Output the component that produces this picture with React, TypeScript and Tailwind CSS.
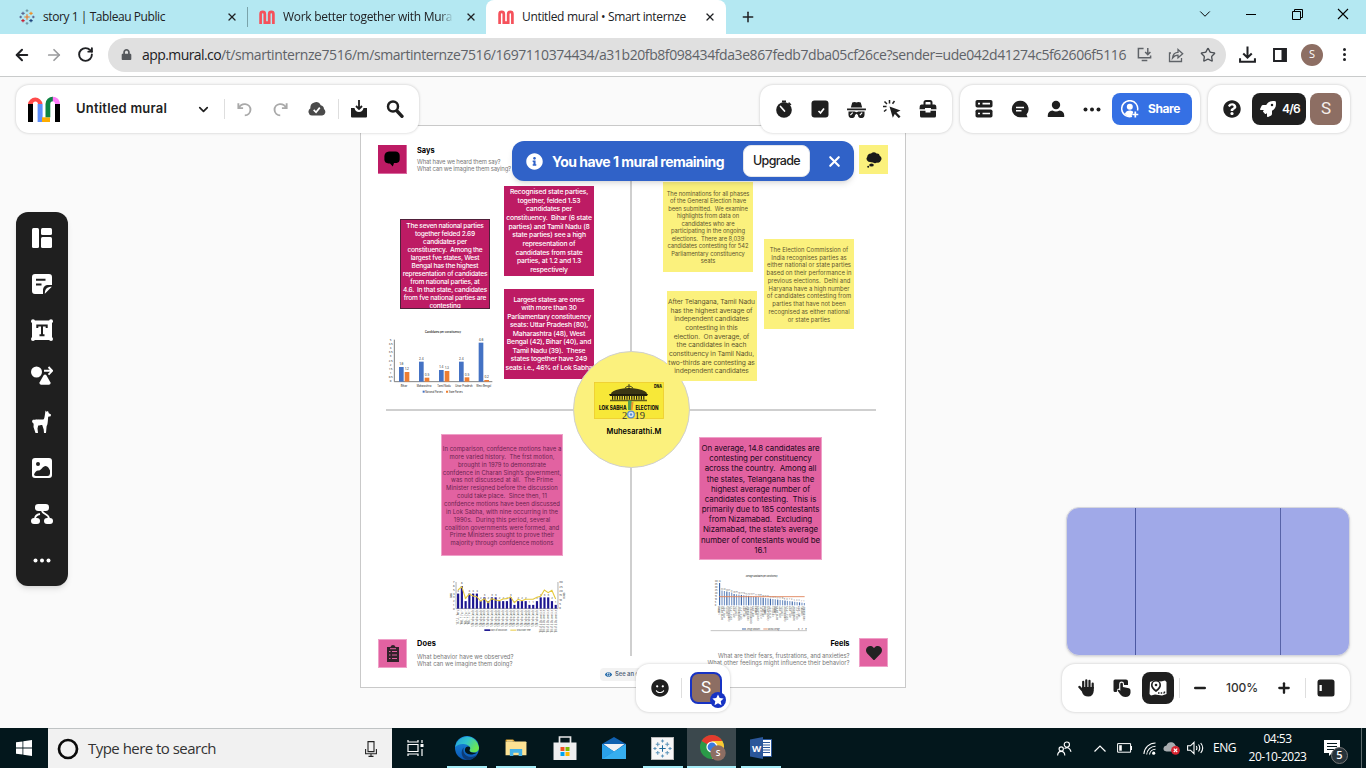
import React, { useLayoutEffect, useRef, useState } from "react";
import {
  ArrowLeft, ArrowRight, RotateCw, X, Plus, Minus, ChevronDown, Star,
} from "lucide-react";
import {
  FaUser, FaQuestionCircle, FaRocket, FaHeart, FaInfoCircle, FaEye, FaLock, FaSmile,
} from "react-icons/fa";

const SEGOE = "font-['Open_Sans','Noto_Sans',sans-serif]";
const MURAL = "font-['Inter','Noto_Sans',sans-serif]";

/** A single line of text whose tracking is adjusted to fill the given width. */
function Fit({ w, children, className = "" }: { w: number; children: string; className?: string }) {
  const ref = useRef<HTMLSpanElement>(null);
  const [ls, setLs] = useState(0);
  useLayoutEffect(() => {
    const el = ref.current!;
    setLs((w - el.getBoundingClientRect().width) / children.length);
  }, []);
  return (
    <span ref={ref} className={`inline-block whitespace-pre ${className}`} style={{ letterSpacing: ls }}>
      {children}
    </span>
  );
}

/** A sticky note: the widest line is tracked to `w`, the others share the tracking. */
function Note({ w, lines, className }: { w: number; lines: string[]; className: string }) {
  const ref = useRef<HTMLDivElement>(null);
  const [ls, setLs] = useState(0);
  useLayoutEffect(() => {
    let best = 0;
    let len = 1;
    ref.current!.querySelectorAll("span").forEach((s) => {
      const r = s.getBoundingClientRect().width;
      if (r > best) {
        best = r;
        len = s.textContent!.length;
      }
    });
    setLs((w - best) / len);
  }, []);
  return (
    <div ref={ref} className={`absolute flex flex-col items-center overflow-hidden whitespace-pre ${className}`} style={{ letterSpacing: ls }}>
      {lines.map((l, i) => (
        <span key={i} className="block">{l}</span>
      ))}
    </div>
  );
}

const Slot = ({ children }: { children: React.ReactNode }) => (
  <div className="flex h-8 w-9 shrink-0 items-center justify-center text-[#1f1f1f]">{children}</div>
);

const MuralMark = () => (
  <svg viewBox="0 0 16 14" className="h-[14px] w-[16px] shrink-0" fill="none" stroke="#f5515b" strokeWidth="2.7">
    <path d="M1.6 14V4a2.1 2.1 0 0 1 4.2 0v8.6h4.4V4a2.1 2.1 0 0 1 4.2 0v10" />
  </svg>
);

const MuralLogo = () => (
  <svg viewBox="0 0 32 26" className="h-[26px] w-8 shrink-0">
    <path d="M0 8h5v18H0zM27 8h5v18h-5z" fill="#000" />
    <path d="M0 8a7.3 7.3 0 0 1 14.5 0h-4.6a2.5 2.5 0 0 0-5 0z" fill="#ff4b4b" />
    <path d="M9.600 8h5v13.500l-.6 4.500h-4.400z" fill="#5c8dfa" />
    <path d="M14 21.300h8V26h-8z" fill="#fdac00" />
    <path d="M17.500 21.300V8A7.300 7.300 0 0 1 25 .7V5.300a2.700 2.700 0 0 0-2.700 2.700v13.300z" fill="#0d8343" />
    <path d="M24.800.7A7.300 7.300 0 0 1 32 8h-5a2.500 2.500 0 0 0-2.200-2.700z" fill="#ff7bfa" />
  </svg>
);

const TableauMark = ({ mono = false }: { mono?: boolean }) => {
  const c = (x: string) => (mono ? "#5b93b9" : x);
  return (
    <svg viewBox="0 0 24 24" className={mono ? "size-[19px]" : "size-4"} fill="none" strokeWidth={mono ? "1.3" : "1.7"}>
      <path d="M12 8v8M8 12h8" stroke={mono ? "#1f6a9c" : "#e97627"} />
      <path d="M6 4v5M3.500 6.500h5" stroke={c("#5c6692")} />
      <path d="M18 4v5M15.500 6.500h5" stroke={c("#eb912c")} />
      <path d="M6 15v5M3.500 17.500h5" stroke={c("#c72035")} />
      <path d="M18 15v5M15.500 17.500h5" stroke={c("#1f457e")} />
      <path d="M12 .5v4M10 2.500h4M12 19.500v4M10 21.500h4" stroke={c("#7199a6")} />
      <path d="M2.500 10v4M.5 12h4M21.500 10v4M19.500 12h4" stroke={c("#5b6591")} />
    </svg>
  );
};

function TabBar() {
  return (
    <div className={`flex h-[34px] items-stretch bg-[#b4e8f2] text-[12px] text-[#202124] ${SEGOE}`}>
      <div className="flex w-[247px] items-center pl-[19px]">
        <TableauMark />
        <div className="ml-2 w-[180px]"><Fit w={122}>story 1 | Tableau Public</Fit></div>
        <X className="ml-[3px] size-3" strokeWidth={2.6} />
      </div>
      <div className="my-[7px] w-px bg-[#7aa3aa]" />
      <div className="flex w-[238px] items-center pl-[11px]">
        <MuralMark />
        <div className="ml-2 w-[174px] overflow-hidden [mask-image:linear-gradient(to_right,black_90%,transparent_98%)]">
          <Fit w={172}>Work better together with Mural</Fit>
        </div>
        <X className="ml-[8px] size-3" strokeWidth={2.600} />
      </div>
      <div className="flex w-[240px] items-center rounded-t-lg bg-white pl-[12px]">
        <MuralMark />
        <div className="ml-2 w-[174px]"><Fit w={164}>Untitled mural • Smart internze</Fit></div>
        <X className="ml-[8px] size-3" strokeWidth={2.600} />
      </div>
      <div className="flex w-[44px] items-center justify-center"><Plus className="size-[16px]" strokeWidth={2.300} /></div>
      <div className="ml-auto flex h-[28px] items-center text-black">
        <div className="flex w-[46px] justify-center"><ChevronDown className="size-[18px]" strokeWidth={1.300} /></div>
        <div className="flex w-[46px] justify-center"><div className="h-px w-[10px] bg-black" /></div>
        <div className="flex w-[46px] justify-center">
          <svg viewBox="0 0 11 11" className="size-[11px]" fill="none" stroke="#000"><path d="M.5 2.500h8v8h-8zM2.500 2.500v-2h8v8h-2" /></svg>
        </div>
        <div className="flex w-[46px] justify-center">
          <svg viewBox="0 0 12 12" className="size-[12px]" stroke="#000" strokeWidth="1.100"><path d="M1 1l10 10M11 1L1 11" /></svg>
        </div>
      </div>
    </div>
  );
}

function AddressBar() {
  return (
    <div className={`flex h-[43px] items-center border-b border-[#c9cbcb] bg-white pb-px text-[#202124] ${SEGOE}`}>
      <ArrowLeft className="ml-[13px] size-[18px]" strokeWidth={2.700} />
      <ArrowRight className="ml-[14px] size-[18px] text-[#9a9b9d]" strokeWidth={2.300} />
      <RotateCw className="ml-[14px] size-[17px]" strokeWidth={2.700} />
      <div className="ml-[14px] flex h-[34px] w-[1118px] items-center rounded-full bg-[#e0e0e0] pl-[13px] text-[14px]">
        <FaLock className="size-[11px] text-[#55585c]" />
        <div className="ml-[10px] flex w-[984px]">
          <Fit w={79}>app.mural.co</Fit>
          <Fit w={905} className="text-[#5f6368]">/t/smartinternze7516/m/smartinternze7516/1697110374434/a31b20fb8f098434fda3e867fedb7dba05cf26ce?sender=ude042d41274c5f62606f5116</Fit>
        </div>
        <svg viewBox="0 0 16 16" className="ml-[11px] size-[15px]" fill="none" stroke="#5f6368" strokeWidth="1.600">
          <path d="M7 1.500H1.500v10h13V9M5 14.500h6M11.500 1v7M8.700 5.300l2.800 2.800 2.800-2.800" />
        </svg>
        <svg viewBox="0 0 16 16" className="ml-[16px] size-[16px]" fill="none" stroke="#5f6368" strokeWidth="1.300">
          <path d="M3 6H1.500v8.500h12V11M4.500 11C5 7 7 5.300 10 5.300V2.500l4.700 4.200L10 10.800V8.200C7.500 8.200 6 9 4.500 11z" />
        </svg>
        <Star className="ml-[16px] size-[16px] text-[#4d5156]" />
      </div>
      <svg viewBox="0 0 16 16" className="ml-[13px] size-[17px]" fill="none" stroke="#202124" strokeWidth="1.900">
        <path d="M8 .5v10M4 7l4 4 4-4M1 11.500v3.300h14v-3.300" />
      </svg>
      <svg viewBox="0 0 14 14" className="ml-[17px] size-[14px]"><path d="M1 1h12v12H1z" fill="none" stroke="#202124" strokeWidth="1.900" /><path d="M8.500 1H13v12H8.500z" fill="#202124" /></svg>
      <div className="ml-[14px] flex size-[22px] items-center justify-center rounded-full bg-[#8d6e63] text-[11px] text-white">S</div>
      <div className="ml-[20px] flex flex-col gap-[2px]">
        {[0, 1, 2].map((i) => <div key={i} className="size-[3px] rounded-full bg-[#202124]" />)}
      </div>
    </div>
  );
}

const CARD = "absolute flex items-center rounded-[13px] bg-white shadow-[0_0_3px_rgba(0,0,0,0.22)]";
const Divider = ({ className = "" }: { className?: string }) => <div className={`h-5 w-px shrink-0 bg-[#dedede] ${className}`} />;
const Dots = ({ className = "" }: { className?: string }) => (
  <svg viewBox="0 0 18 5" className={`h-[5px] w-[18px] ${className}`} fill="currentColor"><circle cx="2.500" cy="2.500" r="2" /><circle cx="9" cy="2.500" r="2" /><circle cx="15.500" cy="2.500" r="2" /></svg>
);

function TopBars() {
  return (
    <>
      <div className={`${CARD} left-4 top-[8px] h-[48px] w-[403px] pl-3`}>
        <MuralLogo />
        <div className="ml-4 w-[109px] text-[13px] font-semibold text-[#222]"><Fit w={91}>Untitled mural</Fit></div>
        <Slot><ChevronDown className="size-[15px]" strokeWidth={2.700} /></Slot>
        <Divider className="ml-[3px]" />
        <div className="ml-px flex">
          <Slot>
            <svg viewBox="0 0 18 18" className="size-[17px]" fill="none" stroke="#a9a9a9" strokeWidth="2"><path d="M2.500 2.500v5h5M3 7.300C4.500 4.500 7 3 9.800 3.300c3.500.3 5.700 3 5.500 6.200-.2 3.400-2.900 5.600-6 5.700" /></svg>
          </Slot>
          <Slot>
            <svg viewBox="0 0 18 18" className="size-[17px]" fill="none" stroke="#a9a9a9" strokeWidth="2"><path d="M15.500 2.500v5h-5M15 7.300C13.500 4.500 11 3 8.200 3.300c-3.500.3-5.700 3-5.500 6.200.2 3.400 2.900 5.600 6 5.700" /></svg>
          </Slot>
          <Slot>
            <svg viewBox="0 0 20 16" className="h-[15px] w-[19px]"><path d="M5 14.500A4.300 4.300 0 0 1 3.500 6.600 5.800 5.800 0 0 1 14.500 3.500a4.500 4.500 0 0 1 3.500 4A4 4 0 0 1 16 14.500z" fill="#4a4a4a" /><path d="M7 8.500l2.500 2.500 4-5" fill="none" stroke="#fff" strokeWidth="1.800" /></svg>
          </Slot>
        </div>
        <Divider className="ml-[4px] mr-[2px]" />
        <Slot>
          <svg viewBox="0 0 18 18" className="size-[18px]"><path d="M1 8h3.500c.5 2.500 2 4 4.500 4s4-1.500 4.500-4H17v8.500a1 1 0 0 1-1 1H2a1 1 0 0 1-1-1z" fill="currentColor" /><path d="M9 0v9M6 6l3 3 3-3" fill="none" stroke="currentColor" strokeWidth="1.800" /></svg>
        </Slot>
        <Slot>
          <svg viewBox="0 0 18 18" className="size-[18px]" fill="none" stroke="currentColor" strokeLinecap="round"><circle cx="7" cy="6.500" r="5" strokeWidth="2.500" /><path d="M11.500 11.500l4.500 4.800" strokeWidth="3.400" /></svg>
        </Slot>
      </div>

      <div className={`${CARD} left-[760px] top-[8px] h-[48px] w-[192px] pl-[6px]`}>
        <Slot>
          <svg viewBox="0 0 18 18" className="size-[18px]"><circle cx="9" cy="10" r="7.800" fill="currentColor" /><path d="M7 .5h4v2H7zM14 2l2.500 2.500-1.500 1L13 3.500z" fill="currentColor" /><path d="M5.500 6.500L9.500 11" stroke="#fff" strokeWidth="1.700" strokeLinecap="round" /></svg>
        </Slot>
        <Slot>
          <svg viewBox="0 0 18 18" className="size-[18px]"><rect x=".5" y=".5" width="17" height="17" rx="3" fill="currentColor" /><path d="M7.500 11l2 2 3.500-4.500" stroke="#fff" strokeWidth="1.700" fill="none" /></svg>
        </Slot>
        <Slot>
          <svg viewBox="0 0 20 18" className="h-[17px] w-[19px]" fill="currentColor"><path d="M5.500 1.500L8 1l2 .7L12 1l2.500.5L16 7H4zM0 8h20v1.800H0z" /><path d="M1.500 11h6.500l2 1 2-1h6.500v3.500a3.500 3.500 0 0 1-7 .3L10 13.500l-1.500 1.300a3.500 3.500 0 0 1-7-.3z" /><path d="M3.500 15l2.500-2.800M13.500 15l2.500-2.800" stroke="#fff" strokeWidth="1.200" /></svg>
        </Slot>
        <Slot>
          <svg viewBox="0 0 18 18" className="size-[18px]" fill="currentColor"><path d="M6.500 6.500l11 4-4 2 4 4-1.700 1.700-4-4.200-2 3.700z" /><path d="M0 6.500h3.500M1.500 1.500l2.500 2.500M6.500 0v3.500M11.500 1L9.500 3.700M1 11.500l2.500-2" stroke="currentColor" strokeWidth="1.500" /></svg>
        </Slot>
        <Slot>
          <svg viewBox="0 0 18 18" className="size-[18px]"><path d="M5.500 5V2.500Q5.500 1 7 1h4q1.500 0 1.500 1.500V5" fill="none" stroke="currentColor" strokeWidth="2" /><path d="M2.500 4.500h13q1.500 0 1.700 1.500l.3 3.200H12V8H6v1.200H.5L.8 6q.2-1.500 1.700-1.500zM1 10.700h5.500V12.500h5v-1.800H17V16a1.500 1.500 0 0 1-1.500 1.500h-13A1.500 1.500 0 0 1 1 16z" fill="currentColor" /></svg>
        </Slot>
      </div>

      <div className={`${CARD} left-[960px] top-[8px] h-[48px] w-[240px] pl-[6px]`}>
        <Slot>
          <svg viewBox="0 0 18 18" className="size-[18px]"><rect x=".5" y="0" width="17" height="7.500" rx="1.800" fill="currentColor" /><rect x=".5" y="9.500" width="17" height="8" rx="1.800" fill="currentColor" /><path d="M3 3.700h2M7.500 3.700h7.500M3 13.500h2M7.500 13.500h7.500" stroke="#fff" strokeWidth="1.700" /></svg>
        </Slot>
        <Slot>
          <svg viewBox="0 0 18 18" className="size-[18px]"><path d="M9 .8a8.200 8.200 0 1 0 0 16.400h7.500l-1-2.800A8.200 8.200 0 0 0 9 .8z" fill="currentColor" /><path d="M5 7.500h8M5 10.700h5.500" stroke="#fff" strokeWidth="1.500" /></svg>
        </Slot>
        <Slot>
          <svg viewBox="0 0 18 18" className="size-[18px]" fill="currentColor"><circle cx="9" cy="5" r="4.200" /><path d="M.8 17v-2q.3-4 4.700-4.500Q9 12.300 12.500 10.500q4.400.5 4.700 4.500v2z" /></svg>
        </Slot>
        <Slot><Dots /></Slot>
        <div className="ml-[2px] flex h-8 w-20 items-center rounded-lg bg-[#3570e4] pl-[9px] text-white">
          <svg viewBox="0 0 18 18" className="size-[18px]" fill="none" stroke="#fff" strokeWidth="1.500"><path d="M11 16.300a8 8 0 1 1 5.500-5.800" /><circle cx="8.800" cy="6.800" r="3" fill="#fff" stroke="none" /><path d="M3.800 14c.8-2.500 2.700-3.500 5-3.500 1.500 0 2.700.5 3.500 1.500L10.500 16c-2.500.8-5 0-6.700-2z" fill="#fff" stroke="none" /><path d="M14.300 11.500v6M11.300 14.500h6" strokeWidth="1.700" /></svg>
          <span className="ml-[9px] text-[12px] font-bold"><Fit w={32}>Share</Fit></span>
        </div>
      </div>

      <div className={`${CARD} left-[1208px] top-[8px] h-[48px] w-[142px] pl-[6px]`}>
        <Slot><FaQuestionCircle className="size-[18px]" /></Slot>
        <div className="ml-[2px] flex h-8 w-[54px] items-center rounded-lg bg-[#1f1f1f] pl-2 text-[12px] font-semibold text-white">
          <FaRocket className="size-[16px]" />
          <span className="ml-[6px]"><Fit w={18}>4/6</Fit></span>
        </div>
        <div className={`ml-1 flex size-8 items-center justify-center rounded-lg bg-[#8d6e63] text-[17px] text-[#f6efec] font-['Roboto',sans-serif]`}>S</div>
      </div>
    </>
  );
}

function SideBar() {
  const s = "size-[22px]";
  const items = [
    <svg viewBox="0 0 22 22" className={s} fill="#fff"><rect x="1" y="1" width="7" height="20" rx="1.500" /><rect x="10" y="1" width="11" height="7" rx="1.500" /><rect x="10" y="10" width="11" height="11" rx="1.500" /></svg>,
    <svg viewBox="0 0 22 22" className={s} fill="#fff"><path d="M4 1h14a3 3 0 0 1 3 3v8h-3.500C14 12 12 14 12 17.500V21H4a3 3 0 0 1-3-3V4a3 3 0 0 1 3-3z" /><path d="M13.800 20.800c0-4.500 2-7 7-7z" /><path d="M5 6.700h9.500M5 11.500h5.500" stroke="#1f1f1f" strokeWidth="2.100" /></svg>,
    <svg viewBox="0 0 22 22" className={s} fill="#fff"><rect x="1" y="1.500" width="20" height="19.500" /><circle cx="2" cy="2.300" r="2" /><circle cx="20" cy="2.300" r="2" /><circle cx="2" cy="20" r="2" /><circle cx="20" cy="20" r="2" /><path d="M6.300 9V6.600h9.400V9M11 6.600v9.600M8.500 16.300h5" fill="none" stroke="#1f1f1f" strokeWidth="2" /></svg>,
    <svg viewBox="0 0 22 22" className={s} fill="#fff"><circle cx="5.500" cy="7" r="5.500" /><path d="M12.500 10.500q1.500-2 3 0l4 7q.6 2-1.500 2.200h-8q-2-.2-1.500-2.200z" /><path d="M13 5.800h7.500M17.500 2l3.700 3.800L17.500 9.600" fill="none" stroke="#fff" strokeWidth="1.900" /></svg>,
    <svg viewBox="0 0 22 24" className="h-6 w-[22px]" fill="#fff"><path d="M14.500.5l1 1.200L17 1l.8 2.200 2.200 1.300-.3 1.700-2.500.5c-.3 2.500-.2 4-.7 7-.2 1.300-1 2.200-1 3.500l-.5 5.800h-2l-.3-3.500-1.500-4.500-1-.1c-1.500.6-3 .6-3 .6l-.7 3 .5 4.500H4.500l-2-6c0-1.500.3-2 0-3.500L1 12l.5-2c1.500-.5 9-.3 11.300-.7.9-1.800 1.200-5.300 1.700-8.800z" /></svg>,
    <svg viewBox="0 0 22 22" className={s}><rect x="1" y="1" width="20" height="20" rx="3" fill="#fff" /><circle cx="7" cy="7" r="2" fill="#1f1f1f" /><path d="M3 17.500c1-2.500 2.500-4.500 5-4 2-.2 4-4.500 6.500-4.500 2.500.3 3.500 2.500 4.500 4.500v3q-.2 2.500-2.500 2.500h-11Q3.200 19 3 17.500z" fill="#1f1f1f" /></svg>,
    <svg viewBox="0 0 22 22" className={s} fill="#fff"><rect x="4" y="1" width="14" height="7" rx="3.300" /><rect x="0" y="15" width="9" height="6" rx="3" /><rect x="13" y="15" width="9" height="6" rx="3" /><path d="M11 7c0 5 7 3 7 9M4 16c0-3.500 2-4.500 5-5" fill="none" stroke="#fff" strokeWidth="1.800" /></svg>,
    <Dots className="text-white" />,
  ];
  return (
    <div className="absolute left-4 top-[135px] flex h-[374px] w-[52px] flex-col rounded-[12px] bg-[#1f1f1f] py-[3px] shadow-md">
      {items.map((it, i) => <div key={i} className="flex h-[46px] shrink-0 items-center justify-center">{it}</div>)}
    </div>
  );
}

function StateChart() {
  const d = [[42, 126, 141, "1.8", "1.2", "Bihar"], [102, 110, 158, "2.4", "0.5", "Maharashtra"], [162, 135, 138, "1.4", "1.3", "Tamil Nadu"], [222, 110, 157, "2.4", "0.5", "Uttar Pradesh"], [281, 53, 165, "4.6", "0.2", "West Bengal"]] as [number, number, number, string, string, string][];
  return (
    <svg viewBox="0 0 345 225" className="absolute left-[25px] top-[200px] h-[75px] w-[115px] font-['Inter',sans-serif]" fill="#222" textAnchor="middle" fontSize="8">
      <text x="174" y="25" fontSize="9" fontWeight="600" textLength="108" lengthAdjust="spacingAndGlyphs">Candidates per constituency</text>
      <path d="M28 44v126h294" fill="none" stroke="#666" strokeWidth="2.500" />
      {["5", "4.5", "4", "3.5", "3", "2.5", "2", "1.5", "1", "0.5", "0"].map((t, i) => <text key={t} x="17" y={47 + i * 12.500}>{t}</text>)}
      {d.map(([x, a, b, la, lb, n]) => (
        <g key={n}>
          <rect x={x} y={a} width="14" height={170 - a} fill="#4472c4" />
          <rect x={x + 17} y={b} width="14" height={170 - b} fill="#ed7d31" />
          <text x={x + 7} y={a - 5} fontSize="9">{la}</text>
          <text x={x + 24} y={b - 5} fontSize="9">{lb}</text>
          <text x={x + 15} y="185" textLength={n.length * 4} lengthAdjust="spacingAndGlyphs" fontSize="9">{n}</text>
        </g>
      ))}
      <path d="M113 197h6v6h-6z" fill="#4472c4" /><path d="M183 197h6v6h-6z" fill="#ed7d31" />
      <text x="147" y="203" fontSize="9" textLength="52" lengthAdjust="spacingAndGlyphs">National Parties</text>
      <text x="212" y="203" fontSize="9" textLength="42" lengthAdjust="spacingAndGlyphs">State Parties</text>
    </svg>
  );
}

function MotionChart() {
  const v = [4, 6, 2, 4, 4, 4, 2, 3, 2, 3, 3, 2, 2, 2, 3, 1, 2, 2, 2, 1, 1, 2, 3, 3, 3, 2, 1];
  const l = [570, 560, 595, 582, 588, 590, 603, 596, 608, 596, 600, 602, 597, 596, 591, 608, 598, 602, 598, 598, 598, 592, 589, 570, 578, 571, 597];
  const names = ["1963 J. L. Nehru", "1964 L. B. Shastri", "1965 L. B. Shastri", "1965 L. B. Shastri"];
  const name = (i: number) => (i < 4 ? names[i] : i < 22 ? "1974 Indira Gandhi" : "1999 A. B. Vajpayee Gov");
  return (
    <svg viewBox="260 540 360 160" className="absolute left-[86.700px] top-[180px] h-[53.300px] w-[120px] font-['Inter',sans-serif]" fontSize="8" fill="#333">
      <path d="M287 546v80h306v-80" fill="none" stroke="#888" strokeWidth="2" />
      {v.map((n, i) => {
        const x = 290 + i * 11.270;
        return (
          <g key={i}>
            <rect x={x} y={626 - n * 11.300} width="6.500" height={n * 11.300} fill="#1c1690" />
            <text x={x + 1} y={621 - n * 11.300}>{n}</text>
            <text transform={`translate(${x + 6} 630) rotate(-90)`} textAnchor="end" fontSize="8.500" textLength={i < 4 ? 44 : i < 22 ? 51 : 68} lengthAdjust="spacingAndGlyphs">{name(i)}</text>
          </g>
        );
      })}
      <polyline points={l.map((y, i) => `${293 + i * 11.270},${y}`).join(" ")} fill="none" stroke="#e6c93c" strokeWidth="3.300" />
      {[7, 6, 5, 4, 3, 2, 1, 0].map((n, i) => <text key={n} x="278" y={550 + i * 11.300}>{n}</text>)}
      {[30, 25, 20, 15, 10, 5, 0].map((n, i) => <text key={n} x="597" y={550 + i * 13}>{n}</text>)}
      <text transform="translate(275 594) rotate(-90)" textLength="15">Days</text>
      <text transform="translate(614 596) rotate(-90)" textLength="18">Hours</text>
      <path d="M372 688h18v5h-18z" fill="#1c1690" /><path d="M450 690.500h17" stroke="#e6c93c" strokeWidth="3" />
      <text x="392" y="694" textLength="48" lengthAdjust="spacingAndGlyphs">Days of Discussion</text><text x="469" y="694" textLength="42" lengthAdjust="spacingAndGlyphs">Discussion Time</text>
    </svg>
  );
}

function AverageChart() {
  const top = (i: number) => (i === 0 ? 548 : i < 6 ? 569 + i * 1.500 : 581 + (i - 6) * 0.930);
  return (
    <svg viewBox="240 518 295 177" className="absolute left-[350px] top-[447.700px] h-[59px] w-[98.300px] font-['Inter',sans-serif]" fontSize="7" fill="#444">
      <text x="347" y="529" fontSize="8" fontWeight="600" textLength="96" lengthAdjust="spacingAndGlyphs">Average candidates per constituency</text>
      {[40, 35, 30, 25, 20, 15, 10, 5, 0].map((n, i) => <text key={n} x="254" y={544 + i * 9.200}>{n}</text>)}
      {Array.from({ length: 36 }, (_, i) => {
        const x = 267 + i * 7.270;
        const len = 24 + ((i * 17) % 23) + (i === 13 ? 14 : 0);
        return (
          <g key={i}>
            <rect x={x} y={top(i)} width="3.500" height={615 - top(i)} fill={i % 3 ? "#7b9ac9" : "#3f68a8"} />
            <text x={x - 1} y={top(i) - 3} fontSize="5">{36 - i}</text>
            <text transform={`translate(${x + 4} 618) rotate(-90)`} textAnchor="end" textLength={len} lengthAdjust="spacingAndGlyphs">Constituency</text>
          </g>
        );
      })}
      <path d="M267 589h257" stroke="#dd7f55" strokeWidth="2.600" />
      <path d="M242 691h289" stroke="#888" strokeWidth="1.500" />
      <path d="M336 686h12" stroke="#3f68a8" strokeWidth="3" /><path d="M400 686h12" stroke="#dd7f55" strokeWidth="2.500" />
      <text x="350" y="688" textLength="40" lengthAdjust="spacingAndGlyphs">Average Candidates</text><text x="413" y="688" textLength="36" lengthAdjust="spacingAndGlyphs">National Average</text>
      <text x="504" y="689" textLength="26">8 7 9</text>
    </svg>
  );
}

function Heading({ title, a, b, wa, wb, right = false, gap }: { title: string; a: string; b: string; wa: number; wb: number; right?: boolean; gap: string }) {
  return (
    <div className={`flex flex-col ${right ? "items-end" : "items-start"} text-[5.900px] leading-[7.700px] text-[#777]`}>
      <div className={`${gap} text-[7.400px] font-bold leading-[9px] text-black`}><Fit w={title === "Says" ? 17.500 : 19}>{title}</Fit></div>
      <Fit w={wa}>{a}</Fit>
      <Fit w={wb}>{b}</Fit>
    </div>
  );
}

function Board() {
  return (
    <div className="absolute left-[360px] top-[48px] h-[562.500px] w-[546px] border-[1.500px] border-[#c9c9c9] bg-white">
      <div className="absolute -left-px -top-px size-full">
        <div className="absolute left-[26px] top-[284px] h-[1.500px] w-[490px] bg-[#cfcfcf]" />
        <div className="absolute left-[270px] top-[56px] h-[475px] w-[1.500px] bg-[#cfcfcf]" />

        <div className="absolute left-[18px] top-[20px] flex size-[29px] items-center justify-center border-b border-r border-[#d9679f] bg-[#bd1b64]">
          <svg viewBox="0 0 16 16" className="size-[16px]"><path d="M5 .5h6.500Q15.500.8 15.700 4.500v4q-.2 3-3 3.500H10L8.800 15.500 6 12.500H4.500Q.8 12 .4 9V5Q.8.800 5 .5z" /></svg>
        </div>
        <div className="absolute left-[57px] top-[21px]"><Heading gap="mb-[2.500px]" title="Says" a="What have we heard them say?" b="What can we imagine them saying?" wa={83.500} wb={94} /></div>
        <div className="absolute left-[499px] top-[20px] flex size-[29px] items-center justify-center bg-[#fbf17d]">
          <svg viewBox="0 0 16 16" className="size-[16px]" fill="#1a1a1a"><path d="M5 1.500Q8-1 10.500 1.500q3-.3 3.200 2.300Q16.500 5.500 15 8.300q-1 3-4 2.200-2 1.500-4 0L2.500 9.700Q-.8 7.500 1.200 5 1.500 1.800 5 1.500z" /><ellipse cx="5.500" cy="13" rx="2.300" ry="1.500" /><circle cx="2.200" cy="14.800" r="1" /></svg>
        </div>

        <Note className="left-[40px] top-[94px] h-[90px] w-[90px] border border-[#50203a] bg-[#bd1b64] pt-[2px] text-[6.600px] font-medium leading-[8px] text-white" w={84}
          lines={["The seven national parties", "together felded 2.69", "candidates per", "constituency.  Among the", "largest fve states, West", "Bengal has the highest", "representation of candidates", "from national parties, at", "4.6.  In that state, candidates", "from fve national parties are", "contesting"]} />
        <Note className="left-[144px] top-[61px] h-[90px] w-[90px] bg-[#bd1b64] pt-[2px] text-[6.800px] font-medium leading-[8.670px] text-white" w={85.500}
          lines={["Recognised state parties,", "together, felded 1.53", "candidates per", "constituency.  Bihar (6 state", "parties) and Tamil Nadu (8", "state parties) see a high", "representation of", "candidates from state", "parties, at 1.2 and 1.3", "respectively"]} />
        <Note className="left-[144px] top-[164px] h-[90px] w-[90px] bg-[#bd1b64] pt-[6.500px] text-[6.800px] font-medium leading-[8.500px] text-white" w={87}
          lines={["Largest states are ones", "with more than 30", "Parliamentary constituency", "seats: Uttar Pradesh (80),", "Maharashtra (48), West", "Bengal (42), Bihar (40), and", "Tamil Nadu (39).  These", "states together have 249", "seats i.e., 46% of Lok Sabha"]} />

        <div className="absolute left-[212.500px] top-[226px] flex size-[117px] flex-col items-center rounded-full border-[1.500px] border-[#cfcfcf] bg-[#fbf17d]">
          <svg viewBox="0 0 70 37" className="mr-[4px] mt-[30px] h-[37px] w-[70px] shrink-0">
            <rect width="70" height="37" fill="#f7e838" />
            <rect x=".5" y=".5" width="69" height="36" fill="none" stroke="#edc934" strokeWidth=".7" />
            <path d="M17 12q0-3 9-5 5-1 9-1t9 1q9 2 9 5z" fill="#3b3714" />
            <path d="M15 12h39l-1 2H16z" fill="#1f1d0c" />
            <path d="M18 15.500h33" stroke="#2a270f" strokeWidth="4.500" strokeDasharray="1.200 1.200" />
            <path d="M16 18.500h37" stroke="#625c1b" strokeWidth="1.300" />
            <path d="M35 2v5M31 6q4-4 8 0" stroke="#222" strokeWidth=".8" fill="none" />
            <path d="M34 19q2-2 4 1l-1 8h-3z" fill="#4da05a" /><path d="M37.500 20h2l-1 8h-1.500z" fill="#ee9130" />
            <g className="font-['Inter',sans-serif]" fontWeight="800" fill="#111">
              <text x="5" y="28.300" fontSize="6" textLength="27.500" lengthAdjust="spacingAndGlyphs">LOK SABHA</text>
              <text x="41.500" y="28.300" fontSize="6" textLength="23" lengthAdjust="spacingAndGlyphs">ELECTION</text>
              <text x="60" y="5.800" fontSize="4.500" textLength="8" lengthAdjust="spacingAndGlyphs">DNA</text>
            </g>
            <g className="font-['Liberation_Serif',serif]" fontSize="10.500" fill="#333"><text x="28" y="36.700">2</text><text x="40.500" y="36.700">19</text></g>
            <circle cx="37" cy="32.500" r="3.300" fill="#d9e6f2" stroke="#5b8dcd" strokeWidth="1.300" /><circle cx="37" cy="32.500" r="1.200" fill="#5b8dcd" />
          </svg>
          <div className="ml-[6px] mt-[8px] text-[7.400px] font-semibold leading-[9px] text-black"><Fit w={55}>Muhesarathi.M</Fit></div>
        </div>

        <Note className="left-[303px] top-[56.500px] h-[90px] w-[90px] bg-[#fbf17d] pt-[8px] text-[5.800px] leading-[7.550px] text-[#5f5630]" w={82.700}
          lines={["The nominations for all phases", "of the General Election have", "been submitted.  We examine", "highlights from data on", "candidates who are", "participating in the ongoing", "elections.  There are 8,039", "candidates contesting for 542", "Parliamentary constituency", "seats"]} />
        <Note className="left-[404px] top-[114px] h-[90px] w-[90px] bg-[#fbf17d] pt-[6.800px] text-[5.900px] leading-[7.780px] text-[#5f5630]" w={85}
          lines={["The Election Commission of", "India recognises parties as", "either national or state parties", "based on their performance in", "previous elections.  Delhi and", "Haryana have a high number", "of candidates contesting from", "parties that have not been", "recognised as either national", "or state parties"]} />
        <Note className="left-[306.500px] top-[166px] h-[90px] w-[90px] bg-[#fbf17d] pt-[7px] text-[6.700px] leading-[8.670px] text-[#5f5630]" w={87}
          lines={["After Telangana, Tamil Nadu", "has the highest average of", "independent candidates", "contesting in this", "election.  On average, of", "the candidates in each", "constituency in Tamil Nadu,", "two-thirds are contesting as", "independent candidates"]} />

        <Note className="left-[81px] top-[309px] h-[122px] w-[122px] border border-[#efa0c8] bg-[#e262a1] pt-[10px] text-[5.900px] leading-[7.860px] text-[#6b2450]" w={118.500}
          lines={["In comparison, confdence motions have a", "more varied history.  The frst motion,", "brought in 1979 to demonstrate", "confdence in Charan Singh’s government,", "was not discussed at all.  The Prime", "Minister resigned before the discussion", "could take place.  Since then, 11", "confdence motions have been discussed", "in Lok Sabha, with nine occurring in the", "1990s.  During this period, several", "coalition governments were formed, and", "Prime Ministers sought to prove their", "majority through confdence motions"]} />
        <Note className="left-[339px] top-[312px] h-[123px] w-[123px] border border-[#efa0c8] bg-[#e262a1] pt-[5px] text-[7.900px] leading-[10.170px] text-[#220a1c]" w={119}
          lines={["On average, 14.8 candidates are", "contesting per constituency", "across the country.  Among all", "the states, Telangana has the", "highest average number of", "candidates contesting.  This is", "primarily due to 185 contestants", "from Nizamabad.  Excluding", "Nizamabad, the state’s average", "number of contestants would be", "16.1"]} />

        <StateChart />
        <div className="absolute left-0 top-[275px]"><MotionChart /></div>
        <AverageChart />

        <div className="absolute left-[18px] top-[514px] flex size-[29px] items-center justify-center border border-[#efa0c8] bg-[#e262a1]">
          <svg viewBox="0 0 12 17" className="h-[17px] w-[12px]"><path d="M0 2h3.500Q4 0 6 0t2.500 2H12v15H0z" fill="#33222b" /><path d="M2 6.500h1.500M5 6.500h5M2 10h1.500M5 10h5M2 13.500h1.500M5 13.500h5M3 3.700h6" stroke="#e262a1" strokeWidth="1" /></svg>
        </div>
        <div className="absolute left-[57px] top-[514px]"><Heading gap="mb-[4.500px]" title="Does" a="What behavior have we observed?" b="What can we imagine them doing?" wa={96.500} wb={95.500} /></div>
        <div className="absolute right-[54.500px] top-[514px]"><Heading gap="mb-[3.500px]" right title="Feels" a="What are their fears, frustrations, and anxieties?" b="What other feelings might influence their behavior?" wa={131.500} wb={142} /></div>
        <div className="absolute left-[499px] top-[513px] flex size-[29px] items-center justify-center border border-[#efa0c8] bg-[#e262a1]"><FaHeart className="size-[16px] text-[#222]" /></div>
        <div className="absolute left-[240px] top-[542.500px] flex h-[13px] w-[60px] items-center rounded bg-[#f2f2f2] pl-[5px] text-[5.800px] font-semibold text-[#56667c]">
          <FaEye className="size-[7px] shrink-0 text-[#1d65a6]" /><span className="ml-[3px] whitespace-pre">See an example</span>
        </div>
      </div>
    </div>
  );
}

function Banner() {
  return (
    <div className="absolute left-[512px] top-[64px] flex h-10 w-[342px] items-center rounded-[12px] bg-[#3062c8] pl-[14px] text-white shadow-md">
      <FaInfoCircle className="size-[17px]" />
      <div className="ml-[9px] w-[191px] text-[14px] font-bold"><Fit w={172}>You have 1 mural remaining</Fit></div>
      <div className="flex h-8 w-[67px] items-center justify-center rounded-lg border-[1.500px] border-[#e3e5ea] bg-white text-[12.500px] font-medium text-[#222]"><Fit w={47}>Upgrade</Fit></div>
      <X className="ml-[15.500px] size-[17px]" strokeWidth={3} />
    </div>
  );
}

function BottomBars() {
  return (
    <>
      <div className={`${CARD} left-[636px] top-[587px] h-[48px] w-[94px] pl-[6px]`}>
        <Slot><FaSmile className="size-[18px]" /></Slot>
        <Divider className="ml-[3px]" />
        <div className="relative ml-2 flex size-8 items-center justify-center rounded-lg border-2 border-[#1733c4] bg-[#8d6e63] text-[17px] text-white font-['Roboto',sans-serif]">
          S
          <svg viewBox="0 0 16 16" className="absolute -bottom-[6px] -right-[6px] size-[16px]"><circle cx="8" cy="8" r="8" fill="#1733c4" /><path d="M8 2.500l1.700 3.600 3.900.5-2.900 2.700.8 3.900L8 11.300l-3.500 1.900.8-3.900-2.900-2.700 3.900-.5z" fill="#fff" /></svg>
        </div>
      </div>
      <div className="absolute left-[1066px] top-[430px] flex h-[149px] w-[284px] rounded-[13px] border border-[#d5d6de] bg-[#a0a9e8] shadow">
        <div className="w-[69px] border-r border-[#4c59a2]" />
        <div className="w-[145px] border-r border-[#5763a8]" />
      </div>
      <div className={`${CARD} left-[1062px] top-[587px] h-[48px] w-[288px] pl-[6px]`}>
        <Slot>
          <svg viewBox="0 0 18 18" className="ml-px size-[18px]" fill="none" stroke="currentColor" strokeLinecap="round"><path d="M5.200 9V2.800M8.300 8V1.300M11.500 8V1.800M14.700 9V4.500" strokeWidth="2.200" /><path d="M1.500 8l3.500 4" strokeWidth="2.400" /><path d="M4 8h11.800v3.500q-.5 6-5.500 6T4 13z" fill="currentColor" stroke="none" /></svg>
        </Slot>
        <Slot>
          <svg viewBox="0 0 18 18" className="size-[18px]" fill="currentColor"><path d="M2 .5h11a2 2 0 0 1 2 2V6h-4V5a2.400 2.400 0 0 0-4.800 0v4.500l-1.700.5-.8 3H2a1.500 1.500 0 0 1-1.500-1.500V2A1.500 1.500 0 0 1 2 .5z" /><path d="M7.300 5a1.300 1.300 0 0 1 2.600 0v3l6 1.200q1.600.5 1.600 2.300v2.500q-.7 4-5 4-3.500 0-5.500-3l-2.500-3.500q1.200-1.500 2.800.3z" /></svg>
        </Slot>
        <div className="ml-[2px] flex size-8 shrink-0 items-center justify-center rounded-lg bg-[#1f1f1f] text-white">
          <svg viewBox="0 0 18 16" className="h-[16px] w-[18px]"><path d="M1 2l4-1.500 7 1L16 .5l1.500 1.500v12L13 15.500l-7-1L2 15.500.5 14z" fill="#fff" /><path d="M7 11Q2.500 7.500 2.800 5a4.200 4.200 0 0 1 8.400 0Q11.500 7.500 7 11z" fill="#fff" stroke="#1f1f1f" strokeWidth="1.600" /><circle cx="7" cy="5" r="1.300" fill="#1f1f1f" /><path d="M9 13h6.500M15.500 13v-2.500" stroke="#1f1f1f" strokeWidth="1.400" strokeDasharray="1.500 1.200" /></svg>
        </div>
        <Divider className="ml-[5px]" />
        <div className="ml-[2px]"><Slot><Minus className="size-[16px]" strokeWidth={4} /></Slot></div>
        <div className="flex w-[48px] justify-center text-[12px] font-medium text-[#333]"><Fit w={32}>100%</Fit></div>
        <Slot><Plus className="size-[16px]" strokeWidth={3.500} /></Slot>
        <Divider className="ml-[3px] mr-[2px]" />
        <Slot><svg viewBox="0 0 18 18" className="size-[18px]"><rect x=".5" y=".5" width="17" height="17" rx="2.500" fill="currentColor" /><rect x="2.500" y="6" width="2.300" height="6" fill="#fff" /></svg></Slot>
      </div>
    </>
  );
}

function AppSlot({ bar = "", active = false, children }: { bar?: string; active?: boolean; children: React.ReactNode }) {
  return (
    <div className={`relative flex h-10 w-[49px] shrink-0 items-center justify-center ${active ? "bg-[#3b484d]" : ""}`}>
      {children}
      {bar && <div className={`absolute bottom-0 h-[2px] bg-[#a5ecf7] ${bar}`} />}
    </div>
  );
}

function TaskBar() {
  return (
    <div className={`flex h-10 items-center bg-[#03171c] text-white ${SEGOE}`}>
      <div className="flex w-12 justify-center">
        <svg viewBox="0 0 16 16" className="size-4" fill="#fff"><path d="M0 2.300l6.500-.9v6.200H0zM7.300 1.300L16 0v7.600H7.300zM0 8.400h6.500v6.200L0 13.700zM7.300 8.400H16V16l-8.700-1.300z" /></svg>
      </div>
      <div className="flex h-10 w-[344px] items-center border-t border-[#bfc3c4] bg-[#f1f1f1] pl-[9px] text-[#333]">
        <svg viewBox="0 0 22 22" className="size-[22px]"><circle cx="11" cy="11" r="9" fill="none" stroke="#0a0a0a" strokeWidth="2.700" /></svg>
        <div className="ml-[9px] w-[277px] text-[15px]"><Fit w={128}>Type here to search</Fit></div>
        <svg viewBox="0 0 12 16" className="h-4 w-3" fill="none" stroke="#222" strokeWidth="1.100"><path d="M3 .6h6v10H3zM.6 8v4.700h10.800V8M6 12.700v2.700M3.500 15.400h5" /></svg>
      </div>
      <div className="flex w-[50px] items-center justify-center pr-[3px]">
        <svg viewBox="0 0 17 16" className="h-4 w-[17px]" fill="none" stroke="#fff" strokeWidth="1.200"><path d="M1 4.500h10v7H1zM1 0v2h10V0M1 16v-2h10v2M15 0v3M15 9v7" /><path d="M13.500 4h3v3h-3z" fill="#fff" stroke="none" /></svg>
      </div>
      <AppSlot bar="w-10">
        <svg viewBox="0 0 24 24" className="size-6">
          <defs>
            <linearGradient id="e1" x1="0" y1="0" x2="1" y2=".5"><stop offset="0" stopColor="#239fd8" /><stop offset=".5" stopColor="#31c4cf" /><stop offset="1" stopColor="#6be650" /></linearGradient>
            <linearGradient id="e2" x1="0" y1="0" x2="0" y2="1"><stop offset="0" stopColor="#1a8ee0" /><stop offset="1" stopColor="#0b56b3" /></linearGradient>
          </defs>
          <circle cx="12" cy="12" r="12" fill="url(#e2)" />
          <path d="M.2 11A12 12 0 0 1 24 11.500c.2 3-2 5-5 5-3.500 0-5-1-4.500-2.500 1-1 .8-2 .5-3C14 8.500 5 5.500.2 11z" fill="url(#e1)" />
          <path d="M9 11.500c-2 4 1 9.500 7 9.500 2.500 0 4.500-1 6-2.500-2 3.500-6 5.500-10 5.500C6 22 5 14.500 9 11.500z" fill="#0d3c77" />
          <path d="M15 11.200q-2-1.300-4 0-2 2.500-.3 5.300 3 3.200 8.300 1.500 1.500-.5 3-1.500-1.500.5-3 .2-5-.3-4.500-2.700 1-1.200.5-2.800z" fill="#03171c" />
        </svg>
      </AppSlot>
      <AppSlot bar="w-10">
        <svg viewBox="0 0 22 20" className="h-[19px] w-[22px]"><path d="M0 2.500V1.500Q0 .5 1 .5h7l2 2z" fill="#e7a82f" /><path d="M0 2.500h21q1 0 1 1V17H0z" fill="#fce293" /><path d="M1.500 2h6" stroke="#fff1b8" /><path d="M4.500 18v-7.500h13V18h-3.700v-3.500H8.200V18z" fill="#44b2e8" /></svg>
      </AppSlot>
      <AppSlot>
        <svg viewBox="0 0 24 24" className="size-6"><path d="M6.500 7V1h11v6" fill="none" stroke="#e8e8e8" strokeWidth="1.700" /><path d="M.5 6.500h23V24H.5z" fill="#efefef" /><path d="M7.500 11h4v4h-4z" fill="#f25022" /><path d="M12.500 11h4v4h-4z" fill="#7fba00" /><path d="M7.500 16h4v4h-4z" fill="#00a4ef" /><path d="M12.500 16h4v4h-4z" fill="#ffb900" /></svg>
      </AppSlot>
      <AppSlot>
        <svg viewBox="0 0 24 22" className="h-[22px] w-6"><path d="M0 7L12 0l12 7v5H0z" fill="#1161b0" /><path d="M1.500 7h21L12 15z" fill="#f2f2f5" /><path d="M0 7l24 15H0z" fill="#1e86d8" /><path d="M24 7L0 22h24z" fill="#36aeef" /><path d="M0 7v15l12-7.500z" fill="#2aa0e8" /></svg>
      </AppSlot>
      <AppSlot bar="w-10">
        <div className="flex size-[23px] items-center justify-center border border-[#b8b8b8] bg-[#f7f7f7]"><TableauMark mono /></div>
      </AppSlot>
      <AppSlot active bar="w-full">
        <svg viewBox="0 0 26 26" className="ml-[2px] size-[26px] font-['Open_Sans',sans-serif]">
          <circle cx="12" cy="12" r="12" fill="#2a9a48" /><path d="M12 12L1.600 6A12 12 0 0 1 22.400 6z" fill="#e33b2e" /><path d="M12 6h10.400A12 12 0 0 1 12 24l5-9z" fill="#fcc934" />
          <circle cx="12" cy="12" r="5.600" fill="#fff" /><circle cx="12" cy="12" r="4.400" fill="#3a7be0" />
          <circle cx="18" cy="18" r="7.700" fill="#8d6e63" /><text x="18" y="21" fontSize="8.500" fill="#fff" textAnchor="middle" fontWeight="600">S</text>
        </svg>
      </AppSlot>
      <AppSlot bar="w-10">
        <svg viewBox="0 0 22 22" className="size-[22px] font-['Open_Sans',sans-serif]"><path d="M12 2.500h9.500v17H12z" fill="#fff" stroke="#2b579a" /><path d="M13 5.500h7M13 8h7M13 10.500h7M13 13h7M13 15.500h7" stroke="#2b579a" /><path d="M0 2.500L13 0v22L0 19.500z" fill="#2b579a" /><text x="6.500" y="14.500" fontSize="9.500" fontWeight="700" fill="#fff" textAnchor="middle">W</text></svg>
      </AppSlot>
      <div className="ml-auto flex items-center text-[12px]">
        <svg viewBox="0 0 16 16" className="size-[15px]" fill="none" stroke="#fff" strokeWidth="1.200"><circle cx="10.500" cy="3.800" r="2.800" /><circle cx="4.500" cy="8.500" r="2.300" /><path d="M.7 15.500q0-4.500 3.800-4.500t3.800 4.500M8 8q5-3 7 3.500" /></svg>
        <svg viewBox="0 0 12 7" className="ml-[22px] h-[7px] w-3" fill="none" stroke="#fff" strokeWidth="1.200"><path d="M.5 6.500L6 1l5.500 5.500" /></svg>
        <svg viewBox="0 0 16 10" className="ml-[11px] h-[10px] w-4" fill="none" stroke="#fff"><path d="M.6.600h13v8.600H.6zM14.500 3v4" /><path d="M2.200 2.200h2.600v5.500H2.200z" fill="#fff" stroke="none" /></svg>
        <svg viewBox="0 0 14 14" className="ml-[10px] size-[13px]" fill="none" stroke="#fff" strokeWidth="1.100"><path d="M1 13A12.500 12.500 0 0 1 13.500 1M4 13.500A9.500 9.500 0 0 1 13.500 4.500M7 13.500A6.500 6.500 0 0 1 13.500 7.700" /><circle cx="11.500" cy="12" r="1.700" fill="#fff" stroke="none" /></svg>
        <svg viewBox="0 0 17 14" className="ml-[7px] h-[14px] w-[17px]"><path d="M3.500 10.500Q0 10 .5 7 1 4.500 3.500 4.500 5 .8 8.500 1.300q3 .2 4 3.200 2.500.5 2.500 3v3z" fill="#a9adb0" /><circle cx="12.500" cy="9.300" r="4.400" fill="#d8222e" /><path d="M10.800 7.600l3.400 3.400M14.200 7.600l-3.400 3.400" stroke="#fff" strokeWidth="1.200" /></svg>
        <svg viewBox="0 0 17 14" className="ml-[7px] h-[14px] w-[17px]" fill="none" stroke="#fff" strokeWidth="1.100"><path d="M.6 4.800h2.900L7 1.300v11.400L3.500 9.200H.6zM9.300 5q1.200 2 0 4M11.500 3.500q2.500 3.500 0 7M13.700 2q4 5 0 10" /></svg>
        <div className="ml-[9px]"><Fit w={23}>ENG</Fit></div>
        <div className="ml-[9px] flex w-[65px] flex-col items-center text-[12px] leading-[18px]"><Fit w={28}>04:53</Fit><Fit w={58}>20-10-2023</Fit></div>
        <div className="relative ml-[14px] h-[26px] w-[30px]">
          <svg viewBox="0 0 16 16" className="absolute left-0 top-[5px] size-4"><path d="M0 0h16v13H8l-3 3v-3H0z" fill="#fff" /><path d="M3 3.500h10M3 6.500h10M3 9.500h7" stroke="#03171c" /></svg>
          <div className="absolute left-[7px] top-[12px] flex size-[17px] items-center justify-center rounded-full border border-[#777] bg-[#27333a] text-[11px] font-semibold">5</div>
        </div>
        <div className="ml-[7px] mr-1 h-10 w-px bg-[#5d6a6d]" />
      </div>
    </div>
  );
}

export default function App() {
  return (
    <div className="flex h-[768px] w-[1366px] flex-col overflow-hidden bg-white">
      <TabBar />
      <AddressBar />
      <main className={`relative h-[651px] overflow-hidden bg-[#fafafa] ${MURAL}`}>
        <Board />
        <Banner />
        <TopBars />
        <SideBar />
        <BottomBars />
      </main>
      <TaskBar />
    </div>
  );
}
